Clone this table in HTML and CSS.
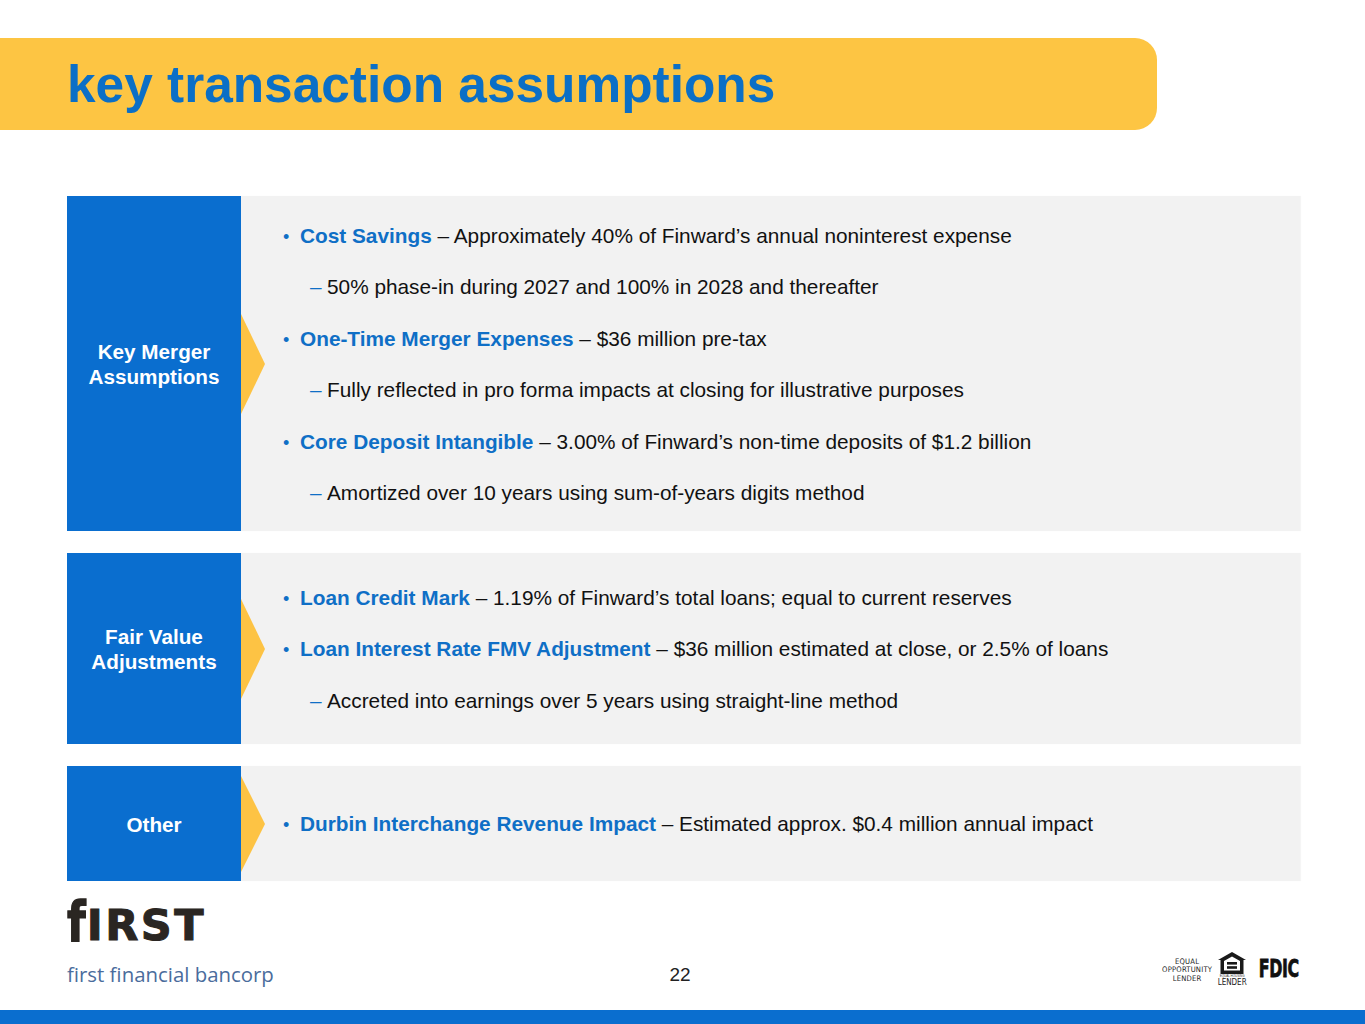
FILE: index.html
```html
<!DOCTYPE html>
<html>
<head>
<meta charset="utf-8">
<link rel="stylesheet" href="styles.css">
</head>
<body>
<div class="slide">
  <header class="title-bar">
    <h1 class="title">key transaction assumptions</h1>
  </header>

  <main class="rows">
    <section class="row row-1">
      <div class="label"><span>Key Merger<br>Assumptions</span></div>
      <div class="panel">
        <div class="line"><span class="dot">•</span><b>Cost Savings</b> – Approximately 40% of Finward’s annual noninterest expense</div>
        <div class="line sub"><span class="dash">–</span>50% phase-in during 2027 and 100% in 2028 and thereafter</div>
        <div class="line"><span class="dot">•</span><b>One-Time Merger Expenses</b> – $36 million pre-tax</div>
        <div class="line sub"><span class="dash">–</span>Fully reflected in pro forma impacts at closing for illustrative purposes</div>
        <div class="line"><span class="dot">•</span><b>Core Deposit Intangible</b> – 3.00% of Finward’s non-time deposits of $1.2 billion</div>
        <div class="line sub"><span class="dash">–</span>Amortized over 10 years using sum-of-years digits method</div>
      </div>
    </section>

    <section class="row row-2">
      <div class="label"><span>Fair Value<br>Adjustments</span></div>
      <div class="panel">
        <div class="line"><span class="dot">•</span><b>Loan Credit Mark</b> – 1.19% of Finward’s total loans; equal to current reserves</div>
        <div class="line"><span class="dot">•</span><b>Loan Interest Rate FMV Adjustment</b> – $36 million estimated at close, or 2.5% of loans</div>
        <div class="line sub"><span class="dash">–</span>Accreted into earnings over 5 years using straight-line method</div>
      </div>
    </section>

    <section class="row row-3">
      <div class="label"><span>Other</span></div>
      <div class="panel">
        <div class="line"><span class="dot">•</span><b>Durbin Interchange Revenue Impact</b> – Estimated approx. $0.4 million annual impact</div>
      </div>
    </section>
  </main>

  <footer class="footer">
    <div class="brand">
      <div class="brand-mark"><span class="brand-f">f</span>IRST</div>
      <div class="brand-name">first financial bancorp</div>
    </div>
    <div class="page-num">22</div>
    <div class="badges">
      <div class="eol">EQUAL<br>OPPORTUNITY<br>LENDER</div>
      <div class="ehl">
        <svg width="30" height="24" viewBox="0 0 30 24">
          <path d="M15 1 L1 9 L3.5 9 L3.5 23 L26.5 23 L26.5 9 L29 9 Z" fill="#1a1a1a"/>
          <path d="M15 5.5 L7 10 L7 19.5 L23 19.5 L23 10 Z" fill="#fff"/>
          <rect x="10" y="11" width="10" height="2.6" fill="#1a1a1a"/>
          <rect x="10" y="15.2" width="10" height="2.6" fill="#1a1a1a"/>
        </svg>
        <div class="ehl-small">EQUAL HOUSING</div>
        <div class="ehl-text">LENDER</div>
      </div>
      <div class="fdic">FDIC</div>
    </div>
  </footer>
  <div class="bottom-bar"></div>
</div>
</body>
</html>
```

FILE: styles.css
```css
* { box-sizing: border-box; }
html, body { margin: 0; padding: 0; background: #fff; }
body { font-family: "Liberation Sans", Arial, sans-serif; }

.slide {
  width: 1365px;
  height: 1024px;
  display: flex;
  flex-direction: column;
  overflow: hidden;
}

.title-bar {
  margin-top: 38px;
  width: 1157px;
  height: 92px;
  background: #fdc543;
  border-radius: 0 22px 22px 0;
  display: flex;
  align-items: center;
  padding-left: 67px;
}
.title {
  margin: 0;
  font-size: 51.4px;
  font-weight: bold;
  color: #0b6fc6;
  line-height: 1.15;
  position: relative;
  top: 1px;
}

.rows {
  margin-top: 66px;
  margin-left: 67px;
  width: 1233px;
  display: flex;
  flex-direction: column;
  gap: 22px;
}
.row { display: flex; position: relative; }
.row-1 { height: 335px; }
.row-2 { height: 191px; }
.row-3 { height: 115px; }

.label {
  width: 174px;
  flex: none;
  background: #0a6ecf;
  color: #fff;
  font-weight: bold;
  font-size: 20.7px;
  line-height: 25px;
  text-align: center;
  display: flex;
  align-items: center;
  justify-content: center;
  position: relative;
  padding-top: 1px;
}
.label::after {
  content: "";
  position: absolute;
  left: 174px;
  top: 50%;
  margin-top: -50px;
  width: 0;
  height: 0;
  border-top: 50px solid transparent;
  border-bottom: 50px solid transparent;
  border-left: 24px solid #fdc344;
  z-index: 2;
}
.row-3 .label::after {
  margin-top: -48px;
  border-top-width: 48px;
  border-bottom-width: 48px;
}

.panel {
  flex: 1;
  background: #f2f2f2;
  box-shadow: 1px 0 1px rgba(0,0,0,0.04);
  display: flex;
  flex-direction: column;
  justify-content: center;
  padding-left: 42px;
  padding-top: 1px;
  font-size: 20.8px;
  color: #111;
}
.line {
  height: 51.5px;
  line-height: 51.5px;
  white-space: nowrap;
}
.line b { color: #0f6fc6; font-weight: bold; }
.dot {
  color: #0f6fc6;
  display: inline-block;
  width: 17px;
  font-size: 18px;
}
.sub { padding-left: 27px; }
.dash {
  color: #0f6fc6;
  display: inline-block;
  width: 17px;
}

.footer {
  flex: 1;
  display: flex;
  align-items: flex-start;
  padding: 22px 66px 0 67px;
  position: relative;
}
.brand { width: 300px; }
.brand-mark {
  font-family: "DejaVu Sans", sans-serif;
  font-weight: bold;
  font-size: 43px;
  line-height: 44px;
  letter-spacing: 2.5px;
  color: #2a2622;
  height: 46px;
  -webkit-text-stroke: 1px #2a2622;
}
.brand-f {
  display: inline-block;
  transform: scaleY(1.3);
  transform-origin: 50% 80%;
  letter-spacing: 1px;
}
.brand-name {
  margin-top: 13px;
  font-family: "Open Sans", sans-serif;
  font-size: 20.4px;
  line-height: 24px;
  color: #4a6c9c;
}
.page-num {
  flex: 1;
  text-align: center;
  font-size: 19px;
  color: #222;
  padding-top: 61px;
  padding-right: 6px;
}
.badges {
  width: 300px;
  display: flex;
  justify-content: flex-end;
  align-items: center;
  gap: 4px;
  padding-top: 48px;
}
.eol {
  font-family: "DejaVu Sans Condensed", "DejaVu Sans", sans-serif;
  font-size: 7.6px;
  line-height: 8.4px;
  text-align: center;
  color: #222;
  letter-spacing: 0.2px;
  margin-top: 3px;
}
.ehl {
  display: flex;
  flex-direction: column;
  align-items: center;
  width: 32px;
}
.ehl svg { display: block; }
.ehl-small {
  font-size: 3px;
  line-height: 3px;
  color: #333;
}
.ehl-text {
  font-family: "DejaVu Sans Condensed", "DejaVu Sans", sans-serif;
  font-size: 8px;
  line-height: 9px;
  color: #222;
}
.fdic {
  font-family: "DejaVu Sans", sans-serif;
  font-weight: bold;
  font-size: 24px;
  line-height: 26px;
  color: #111;
  -webkit-text-stroke: 0.8px #111;
  transform: scaleX(0.66);
  transform-origin: right center;
  margin-left: -14px;
  letter-spacing: -0.5px;
}

.bottom-bar {
  height: 14px;
  background: #0a6ecf;
  flex: none;
}
```
